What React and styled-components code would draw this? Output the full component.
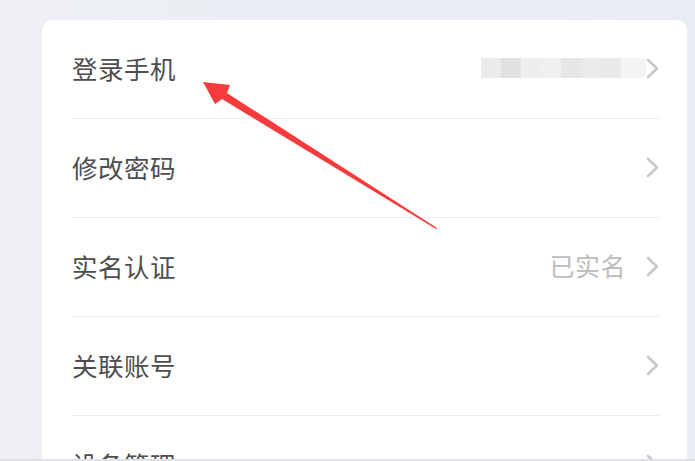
import React from 'react';
import styled, { createGlobalStyle } from 'styled-components';

const GlobalStyle = createGlobalStyle`
    html, body {
        margin: 0;
        padding: 0;
        background: #ebedf4;
        font-family: "Noto Sans CJK SC", "Noto Sans", sans-serif;
    }
`;

const Page = styled.div`
    position: relative;
    width: 695px;
    height: 461px;
    overflow: hidden;
    box-sizing: border-box;
    padding: 20px 8px 0 42px;
    background: linear-gradient(90deg, #eef0f6 0%, #ebedf4 40%, #eaecf3 100%);
    border-bottom: 2px solid #dfe1e7;
`;

const Card = styled.div`
    background: #fff;
    border-radius: 11px 11px 0 0;
    height: 100%;
`;

const Row = styled.div`
    display: flex;
    align-items: center;
    height: 98px;
    margin: 0 28px 0 30px;
    border-bottom: 1px solid #ececee;
`;

const Label = styled.span`
    flex: 1;
    font-size: 25.5px;
    color: #4d4d4f;
    letter-spacing: 0.5px;
    line-height: 1;
    margin-top: -3px;
`;

const Value = styled.span`
    font-size: 25px;
    color: #bcbcbe;
    margin-right: 20px;
    margin-top: -3px;
    letter-spacing: 0.5px;
    line-height: 1;
`;

const Mosaic = styled.div`
    display: flex;
    height: 20px;
    margin-top: -2px;
`;

const Tile = styled.span`
    width: ${p => p.$w}px;
    height: 100%;
    background: ${p => p.$c};
`;

const Chevron = styled.svg`
    width: 13px;
    height: 21px;
    flex: none;
    margin-top: -2px;
`;

const Arrow = styled.svg`
    position: absolute;
    left: 0;
    top: 0;
    pointer-events: none;
`;

const ChevronIcon = () => (
    <Chevron viewBox="0 0 13 21">
        <path d="M2 2 L11 10.5 L2 19" fill="none" stroke="#c9c9cb" strokeWidth="2.6" strokeLinecap="round" strokeLinejoin="round" />
    </Chevron>
);

const tiles = [
    ['#ebebeb', 20], ['#e1e1e1', 20], ['#eeeeee', 20], ['#f0f0f0', 20],
    ['#e6e6e6', 20], ['#eaeaea', 20], ['#e9e9e9', 20], ['#f4f4f4', 25],
];

const rows = [
    { label: '登录手机', masked: true },
    { label: '修改密码' },
    { label: '实名认证', value: '已实名' },
    { label: '关联账号' },
    { label: '设备管理' },
];

export default function App() {
    return (
        <>
            <GlobalStyle />
            <Page>
                <Card>
                    {rows.map(row => (
                        <Row key={row.label}>
                            <Label>{row.label}</Label>
                            {row.value && <Value>{row.value}</Value>}
                            {row.masked && (
                                <Mosaic>
                                    {tiles.map(([c, w], i) => <Tile key={i} $c={c} $w={w} />)}
                                </Mosaic>
                            )}
                            <ChevronIcon />
                        </Row>
                    ))}
                </Card>
                <Arrow width="695" height="461" viewBox="0 0 695 461">
                    <polygon points="203,82 230,85 227,93 437,228 436,229 222,99 215,104" fill="#f53b3b" />
                </Arrow>
            </Page>
        </>
    );
}
